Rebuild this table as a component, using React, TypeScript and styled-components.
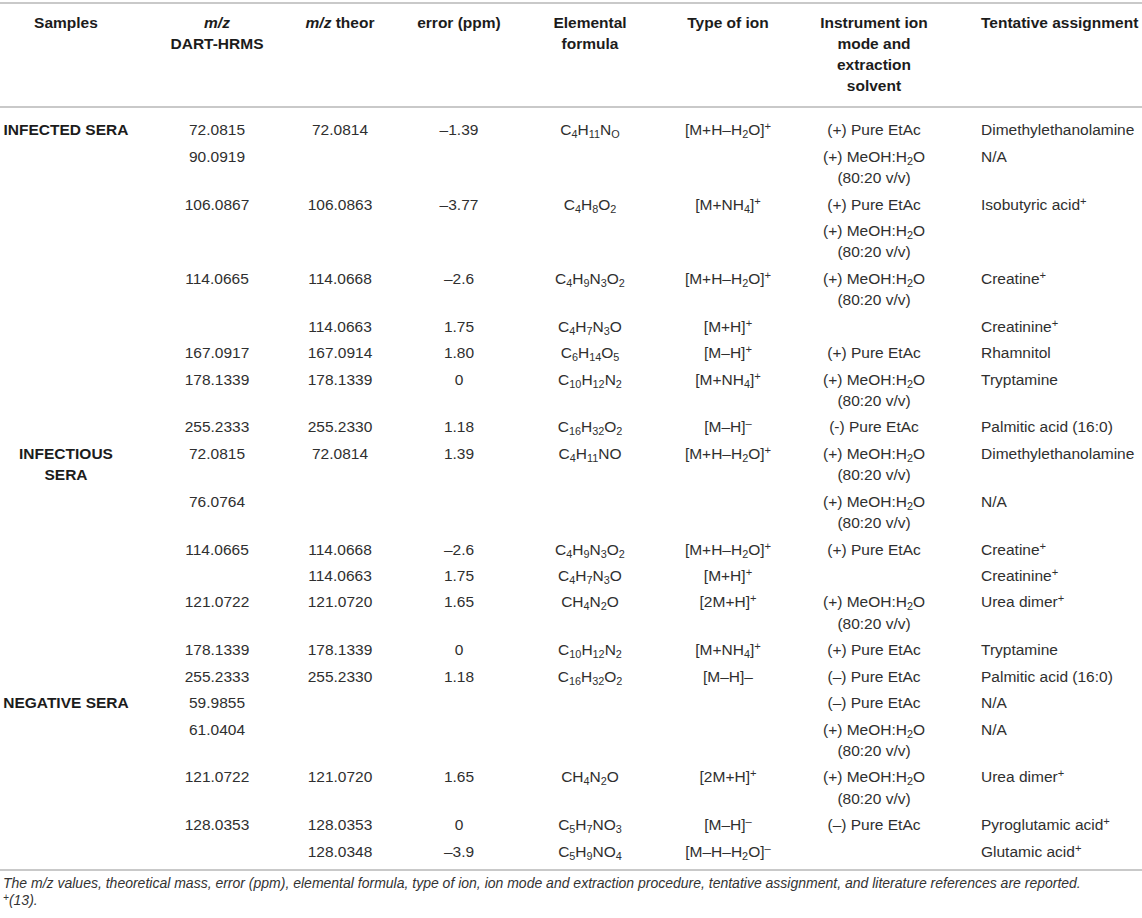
import React from 'react';
import styled, { createGlobalStyle } from 'styled-components';

const GlobalStyle = createGlobalStyle`
  html, body { margin: 0; padding: 0; background: #ffffff; }
  body {
    font-family: "Liberation Sans", Arial, Helvetica, sans-serif;
    color: #2f2f2f;
  }
`;

const Page = styled.div`
  width: 1142px;
  padding-top: 2px;
`;

const Table = styled.table`
  width: 1142px;
  table-layout: fixed;
  border-collapse: separate;
  border-spacing: 0;
  border-top: 2px solid #c9c9c9;
  border-bottom: 2px solid #c9c9c9;
  font-size: 15.5px;
`;

const HeadCell = styled.th<{ $left?: boolean }>`
  padding: 8px 2px 10px ${(p) => (p.$left ? '49px' : '2px')};
  line-height: 21px;
  font-weight: 700;
  color: #1c1c1c;
  text-align: ${(p) => (p.$left ? 'left' : 'center')};
  vertical-align: top;
  border-bottom: 2px solid #c9c9c9;
`;

const Body = styled.tbody`
  & > tr:first-child > td { padding-top: 11.4px; }
  & > tr:last-child > td { padding-bottom: 6.7px; }
`;

const Cell = styled.td<{ $left?: boolean; $bold?: boolean }>`
  padding: 2.6px 2px 2.6px ${(p) => (p.$left ? '49px' : '2px')};
  line-height: 21.3px;
  font-weight: ${(p) => (p.$bold ? 700 : 400)};
  color: ${(p) => (p.$bold ? '#1c1c1c' : '#2f2f2f')};
  text-align: ${(p) => (p.$left ? 'left' : 'center')};
  vertical-align: top;
`;

const Sub = styled.sub`
  font-size: 0.7em;
  line-height: 0;
  vertical-align: -0.3em;
`;

const Sup = styled.sup`
  font-size: 0.72em;
  line-height: 0;
  vertical-align: 0.42em;
`;

const Caption = styled.p`
  margin: 4px 0 0 3px;
  font-size: 14px;
  line-height: 17px;
  font-style: italic;
  color: #333333;
`;

const columns = [132, 170, 76, 162, 100, 176, 116, 210];

const chem = (s: string) => {
  const parts = s.split(/(\d+)/).filter((x) => x !== '');
  return (
    <>
      {parts.map((p, i) => (/^\d+$/.test(p) ? <Sub key={i}>{p}</Sub> : <React.Fragment key={i}>{p}</React.Fragment>))}
    </>
  );
};

const PE = '(+) Pure EtAc';
const NE = '(–) Pure EtAc';
const MW = (
  <>
    (+) MeOH:H<Sub>2</Sub>O
    <br />
    (80:20 v/v)
  </>
);
const ionHH2O = (
  <>
    [M+H–H<Sub>2</Sub>O]<Sup>+</Sup>
  </>
);
const ionNH4 = (
  <>
    [M+NH<Sub>4</Sub>]<Sup>+</Sup>
  </>
);
const ionMH = (
  <>
    [M+H]<Sup>+</Sup>
  </>
);
const ion2M = (
  <>
    [2M+H]<Sup>+</Sup>
  </>
);
const ionMinus = (
  <>
    [M–H]<Sup>–</Sup>
  </>
);
const plus = (t: string) => (
  <>
    {t}
    <Sup>+</Sup>
  </>
);

type Row = React.ReactNode[];

const rows: Row[] = [
  ['INFECTED SERA', '72.0815', '72.0814', '–1.39', <>C<Sub>4</Sub>H<Sub>11</Sub>N<Sub>O</Sub></>, ionHH2O, PE, 'Dimethylethanolamine'],
  ['', '90.0919', '', '', '', '', MW, 'N/A'],
  ['', '106.0867', '106.0863', '–3.77', chem('C4H8O2'), ionNH4, PE, plus('Isobutyric acid')],
  ['', '', '', '', '', '', MW, ''],
  ['', '114.0665', '114.0668', '–2.6', chem('C4H9N3O2'), ionHH2O, MW, plus('Creatine')],
  ['', '', '114.0663', '1.75', chem('C4H7N3O'), ionMH, '', plus('Creatinine')],
  ['', '167.0917', '167.0914', '1.80', chem('C6H14O5'), <>[M–H]<Sup>+</Sup></>, PE, 'Rhamnitol'],
  ['', '178.1339', '178.1339', '0', chem('C10H12N2'), ionNH4, MW, 'Tryptamine'],
  ['', '255.2333', '255.2330', '1.18', chem('C16H32O2'), ionMinus, '(-) Pure EtAc', 'Palmitic acid (16:0)'],
  ['INFECTIOUS SERA', '72.0815', '72.0814', '1.39', chem('C4H11NO'), ionHH2O, MW, 'Dimethylethanolamine'],
  ['', '76.0764', '', '', '', '', MW, 'N/A'],
  ['', '114.0665', '114.0668', '–2.6', chem('C4H9N3O2'), ionHH2O, PE, plus('Creatine')],
  ['', '', '114.0663', '1.75', chem('C4H7N3O'), ionMH, '', plus('Creatinine')],
  ['', '121.0722', '121.0720', '1.65', chem('CH4N2O'), ion2M, MW, plus('Urea dimer')],
  ['', '178.1339', '178.1339', '0', chem('C10H12N2'), ionNH4, PE, 'Tryptamine'],
  ['', '255.2333', '255.2330', '1.18', chem('C16H32O2'), '[M–H]–', NE, 'Palmitic acid (16:0)'],
  ['NEGATIVE SERA', '59.9855', '', '', '', '', NE, 'N/A'],
  ['', '61.0404', '', '', '', '', MW, 'N/A'],
  ['', '121.0722', '121.0720', '1.65', chem('CH4N2O'), ion2M, MW, plus('Urea dimer')],
  ['', '128.0353', '128.0353', '0', chem('C5H7NO3'), ionMinus, NE, plus('Pyroglutamic acid')],
  ['', '', '128.0348', '–3.9', chem('C5H9NO4'), <>[M–H–H<Sub>2</Sub>O]<Sup>–</Sup></>, '', plus('Glutamic acid')],
];

const headers: React.ReactNode[] = [
  'Samples',
  <>
    <i>m/z</i>
    <br />
    DART-HRMS
  </>,
  <>
    <i>m/z</i> theor
  </>,
  'error (ppm)',
  'Elemental formula',
  'Type of ion',
  'Instrument ion mode and extraction solvent',
  'Tentative assignment',
];

export default function App() {
  return (
    <Page>
      <GlobalStyle />
      <Table>
        <colgroup>
          {columns.map((w, i) => (
            <col key={i} style={{ width: w }} />
          ))}
        </colgroup>
        <thead>
          <tr>
            {headers.map((h, i) => (
              <HeadCell key={i} $left={i === 7}>
                {h}
              </HeadCell>
            ))}
          </tr>
        </thead>
        <Body>
          {rows.map((r, ri) => (
            <tr key={ri}>
              {columns.map((_, ci) => (
                <Cell key={ci} $left={ci === 7} $bold={ci === 0}>
                  {r[ci]}
                </Cell>
              ))}
            </tr>
          ))}
        </Body>
      </Table>
      <Caption>
        The m/z values, theoretical mass, error (ppm), elemental formula, type of ion, ion mode and extraction procedure,
        tentative assignment, and literature references are reported.
        <br />
        <Sup>+</Sup>(13).
      </Caption>
    </Page>
  );
}
